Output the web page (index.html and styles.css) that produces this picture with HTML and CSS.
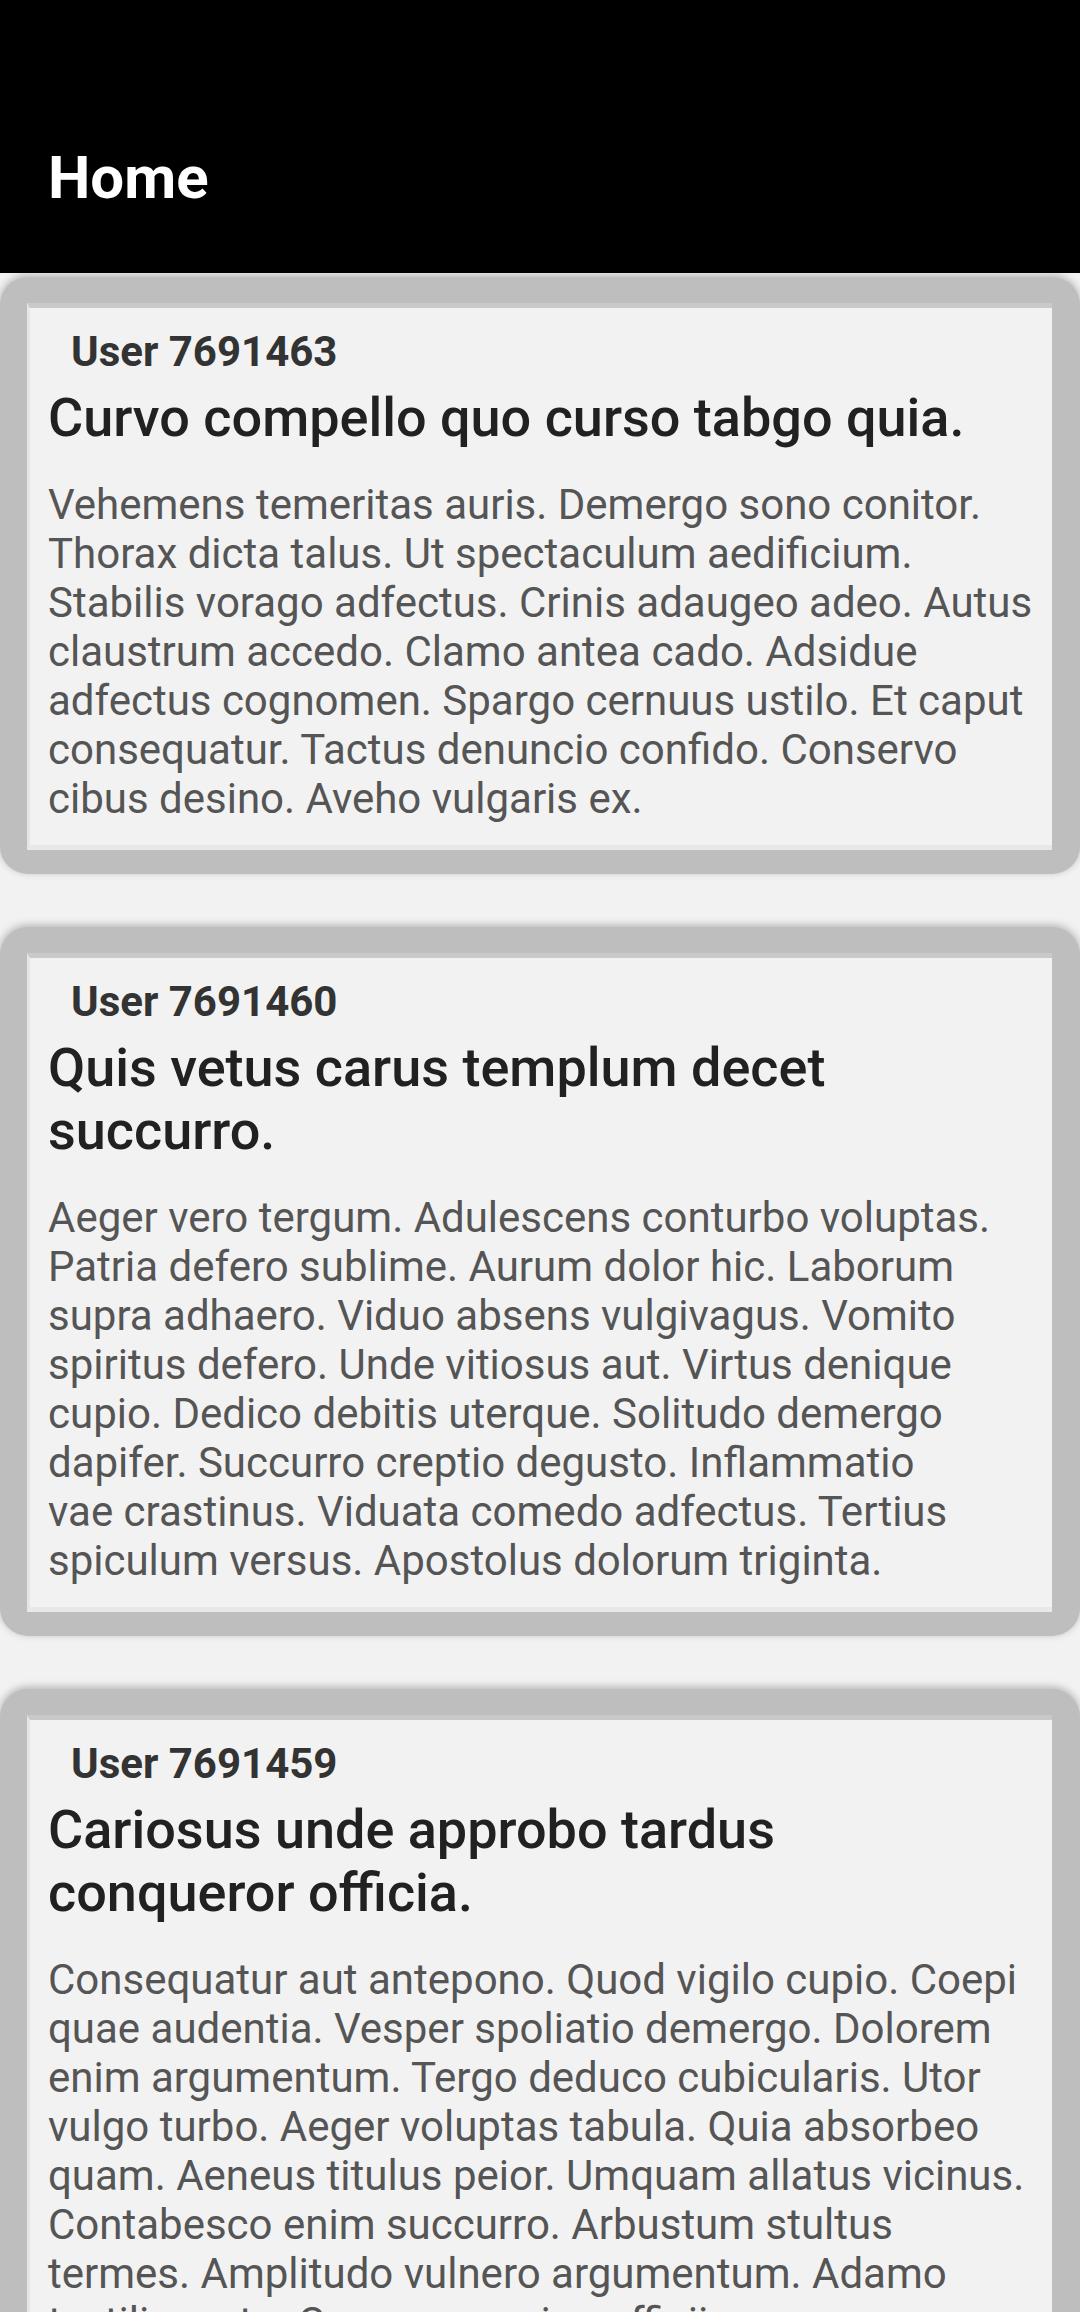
FILE: index.html
```
<!DOCTYPE html>
<html lang="en">
<head>
<meta charset="utf-8">
<title>Home</title>
<link rel="stylesheet" href="styles.css">
</head>
<body>
<header class="appbar"><h1 class="appbar-title">Home</h1></header>
<main class="feed">
  <article class="post">
    <div class="card">
      <div class="user">User 7691463</div>
      <h2 class="title">Curvo compello quo curso tabgo quia.</h2>
      <p class="body">Vehemens temeritas auris. Demergo sono conitor.<br>Thorax dicta talus. Ut spectaculum aedificium.<br>Stabilis vorago adfectus. Crinis adaugeo adeo. Autus<br>claustrum accedo. Clamo antea cado. Adsidue<br>adfectus cognomen. Spargo cernuus ustilo. Et caput<br>consequatur. Tactus denuncio confido. Conservo<br>cibus desino. Aveho vulgaris ex.</p>
    </div>
  </article>
  <article class="post">
    <div class="card">
      <div class="user">User 7691460</div>
      <h2 class="title">Quis vetus carus templum decet<br>succurro.</h2>
      <p class="body">Aeger vero tergum. Adulescens conturbo voluptas.<br>Patria defero sublime. Aurum dolor hic. Laborum<br>supra adhaero. Viduo absens vulgivagus. Vomito<br>spiritus defero. Unde vitiosus aut. Virtus denique<br>cupio. Dedico debitis uterque. Solitudo demergo<br>dapifer. Succurro creptio degusto. Inflammatio<br>vae crastinus. Viduata comedo adfectus. Tertius<br>spiculum versus. Apostolus dolorum triginta.</p>
    </div>
  </article>
  <article class="post">
    <div class="card">
      <div class="user">User 7691459</div>
      <h2 class="title">Cariosus unde approbo tardus<br>conqueror officia.</h2>
      <p class="body">Consequatur aut antepono. Quod vigilo cupio. Coepi<br>quae audentia. Vesper spoliatio demergo. Dolorem<br>enim argumentum. Tergo deduco cubicularis. Utor<br>vulgo turbo. Aeger voluptas tabula. Quia absorbeo<br>quam. Aeneus titulus peior. Umquam allatus vicinus.<br>Contabesco enim succurro. Arbustum stultus<br>termes. Amplitudo vulnero argumentum. Adamo<br>textilis verto. Corrumpo cuius officiis.</p>
    </div>
  </article>
</main>
</body>
</html>
```
FILE: styles.css
```
html, body {
  margin: 0;
  padding: 0;
}
body {
  background: #f2f2f2;
  font-family: Roboto, "Noto Sans", "Liberation Sans", sans-serif;
  width: 1080px;
  overflow: hidden;
}
.appbar {
  background: #000;
  height: 273px;
  box-sizing: border-box;
  padding: 143px 48px 0;
  position: relative;
  z-index: 2;
}
.appbar-title {
  margin: 0;
  color: #fff;
  font-size: 60px;
  line-height: 70px;
  font-weight: 700;
}
.feed {
  display: flex;
  flex-direction: column;
  gap: 53px;
  padding-top: 4px;
}
.post {
  background: #bebebe;
  border-radius: 28px;
  padding: 26px 28px 24px 27px;
  box-shadow: 0 -2px 7px 1px #bebebe;
}
.card {
  background: #f2f2f2;
  border-top: 5px solid #c9c9c9;
  border-left: 3px solid #e6e6e6;
  border-bottom: 5px solid #e8e8e8;
  padding: 19px 14px 22px 18px;
}
.user {
  padding-left: 23px;
  font-size: 42px;
  line-height: 49px;
  font-weight: 700;
  color: #333;
}
.title {
  margin: 10px 0 0;
  font-size: 54px;
  line-height: 63px;
  font-weight: 500;
  color: #212121;
}
.body {
  margin: 31px 0 0;
  font-size: 42px;
  line-height: 49px;
  font-weight: 400;
  color: #555;
}
```
